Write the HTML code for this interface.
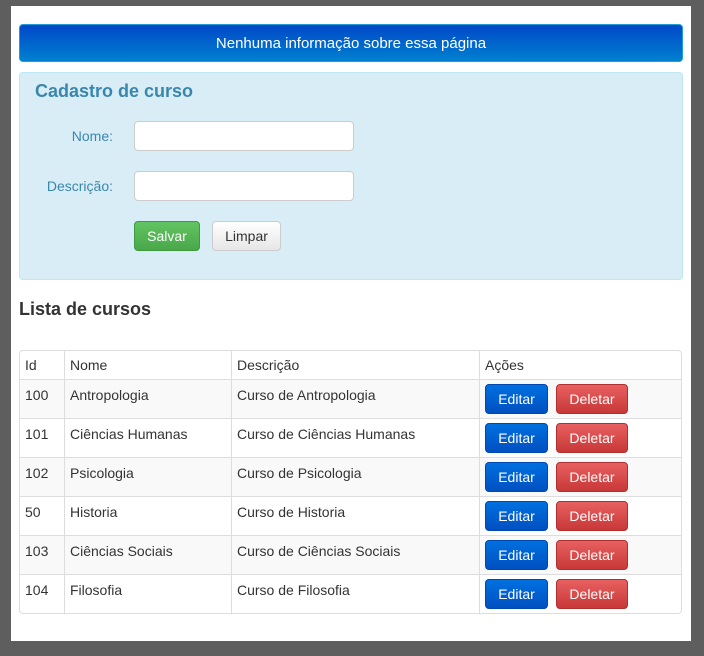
<!DOCTYPE html>
<html><head><meta charset="utf-8"><style>
*{box-sizing:border-box}
body{margin:0;width:704px;height:656px;background:#5e5e5e;font-family:"Liberation Sans",sans-serif;font-size:14px;color:#333;position:relative;overflow:hidden}
.page{position:absolute;left:11px;top:6px;width:680px;height:635px;background:#fff}
.alert{position:absolute;left:8px;top:18px;width:664px;height:38px;border:1px solid #1c9fd9;border-radius:4px;background:linear-gradient(#0048c8,#0080d0);color:#fff;text-align:center;line-height:37px;font-size:15px}
.form{position:absolute;left:8px;top:66px;width:664px;height:208px;background:#d9edf7;border:1px solid #bce8f1;border-radius:4px}
.form h3{margin:0;position:absolute;left:15px;top:8px;font-size:18px;color:#3a87ad;font-weight:bold}
.lbl{position:absolute;right:569px;color:#3a87ad;font-size:14px}
.inp{position:absolute;left:114px;width:220px;height:30px;background:#fff;border:1px solid #ccc;border-radius:4px}
.btn{position:absolute;height:30px;border-radius:4px;font-size:14px;text-align:center;line-height:28px}
h2{position:absolute;left:8px;top:293px;margin:0;font-size:18px;color:#333}
table{position:absolute;left:8px;top:344px;width:663px;border-collapse:separate;border-spacing:0;border:1px solid #ddd;border-radius:4px}
td{border-left:1px solid #ddd;border-top:1px solid #ddd;padding:0 5px;height:39px;vertical-align:top;padding-top:7px}
td:first-child{border-left:none}
tr:first-child td{border-top:none;height:28px;padding-top:6px}
tr:nth-child(even) td{background:#f9f9f9}
.e,.d{display:inline-block;height:30px;color:#fff;border-radius:4px;text-align:center;margin-top:-3px;vertical-align:top}
.e{width:63px;background:linear-gradient(#0070e0,#0050c0);border:1px solid #0048b0;line-height:28px}
.d{width:72px;margin-left:8px;background:linear-gradient(#e86060,#c83838);border:1px solid #b03030;line-height:28px}
</style></head><body><div class="page">
<div class="alert">Nenhuma informação sobre essa página</div>
<div class="form"><h3>Cadastro de curso</h3>
<div class="lbl" style="top:55px">Nome:</div><div class="inp" style="top:48px"></div>
<div class="lbl" style="top:105px">Descrição:</div><div class="inp" style="top:98px"></div>
<div class="btn" style="left:114px;top:148px;width:66px;background:linear-gradient(#62c462,#4aa84a);border:1px solid #3e9a3e;color:#fff">Salvar</div>
<div class="btn" style="left:192px;top:148px;width:69px;background:linear-gradient(#fff,#e6e6e6);border:1px solid #ccc;color:#333">Limpar</div>
</div>
<h2>Lista de cursos</h2>
<table>
<tr><td style="width:44px">Id</td><td style="width:167px">Nome</td><td style="width:248px">Descrição</td><td>Ações</td></tr>
<tr><td>100</td><td>Antropologia</td><td>Curso de Antropologia</td><td><span class="e">Editar</span><span class="d">Deletar</span></td></tr>
<tr><td>101</td><td>Ciências Humanas</td><td>Curso de Ciências Humanas</td><td><span class="e">Editar</span><span class="d">Deletar</span></td></tr>
<tr><td>102</td><td>Psicologia</td><td>Curso de Psicologia</td><td><span class="e">Editar</span><span class="d">Deletar</span></td></tr>
<tr><td>50</td><td>Historia</td><td>Curso de Historia</td><td><span class="e">Editar</span><span class="d">Deletar</span></td></tr>
<tr><td>103</td><td>Ciências Sociais</td><td>Curso de Ciências Sociais</td><td><span class="e">Editar</span><span class="d">Deletar</span></td></tr>
<tr><td>104</td><td>Filosofia</td><td>Curso de Filosofia</td><td><span class="e">Editar</span><span class="d">Deletar</span></td></tr>
</table>
</div></body></html>
